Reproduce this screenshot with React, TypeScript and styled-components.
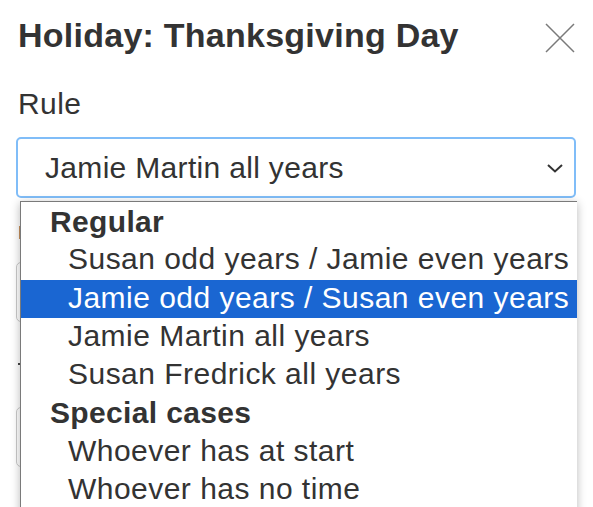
import React from "react";
import styled, { createGlobalStyle } from "styled-components";

const Global = createGlobalStyle`
  html, body { margin: 0; padding: 0; background: #fff; }
  body { font-family: "Liberation Sans", Arial, sans-serif; color: #333; overflow: hidden; }
  * { box-sizing: border-box; }
`;

const Page = styled.div`
  width: 593px;
  height: 507px;
  padding: 0 17px 0 16px;
  position: relative;
  overflow: hidden;
`;

const Header = styled.div`
  display: flex;
  justify-content: space-between;
  align-items: flex-start;
  padding: 13px 0 0 2px;
  height: 78px;
`;

const Title = styled.h1`
  margin: 0;
  font-size: 34px;
  font-weight: 700;
  line-height: 44px;
  letter-spacing: 0.25px;
  color: #333;
`;

const CloseButton = styled.button`
  border: 0;
  background: none;
  padding: 0;
  margin: 9px 0 0 0;
  width: 32px;
  height: 32px;
  display: flex;
  align-items: center;
  justify-content: center;
`;

const Label = styled.div`
  font-size: 30px;
  line-height: 36px;
  letter-spacing: 0.45px;
  padding-left: 2px;
  margin-top: 8px;
  margin-bottom: 15px;
`;

const SelectWrap = styled.div`
  position: relative;
`;

const SelectBox = styled.div`
  height: 61px;
  border: 2px solid #80bdf8;
  border-radius: 5px;
  display: flex;
  align-items: center;
  justify-content: space-between;
  padding: 0 10px 0 27px;
  font-size: 30px;
  letter-spacing: 0.32px;
  background: #fff;
`;

const Underlay = styled.div`
  display: flex;
  flex-direction: column;
  padding-top: 28px;
`;

const Accent = styled.div`
  width: 1px;
  height: 13px;
  margin-left: 3px;
  background: #c7925e;
`;

const Field = styled.div<{ $top: number }>`
  margin-top: ${(p) => p.$top}px;
  height: 60px;
  border: 1px solid #c9c9c9;
  border-radius: 5px;
`;

const SubLabel = styled.div`
  margin-top: 41px;
  margin-left: 2px;
  width: 2px;
  height: 2px;
  background: #444;
`;

const Menu = styled.div`
  position: absolute;
  left: 4px;
  right: -1px;
  top: 64px;
  height: 320px;
  background: #fff;
  border-left: 1px solid #7a7a7a;
  border-top: 1px solid #7a7a7a;
  box-shadow: 0 2px 9px rgba(0, 0, 0, 0.28);
  display: flex;
  flex-direction: column;
  padding-top: 1px;
`;

const GroupLabel = styled.div`
  height: 38.3px;
  line-height: 38px;
  font-size: 30px;
  font-weight: 700;
  letter-spacing: 0.35px;
  padding-left: 29px;
  color: #333;
  white-space: nowrap;
`;

const Option = styled.div<{ $selected?: boolean }>`
  height: 38.3px;
  line-height: 36px;
  font-size: 30px;
  letter-spacing: 0.47px;
  padding-left: 47px;
  white-space: nowrap;
  background: ${(p) => (p.$selected ? "#1a66d2" : "transparent")};
  color: ${(p) => (p.$selected ? "#fff" : "#333")};
`;

const groups = [
  {
    label: "Regular",
    options: [
      "Susan odd years / Jamie even years",
      "Jamie odd years / Susan even years",
      "Jamie Martin all years",
      "Susan Fredrick all years",
    ],
  },
  {
    label: "Special cases",
    options: ["Whoever has at start", "Whoever has no time"],
  },
];

export default function App() {
  const selected = "Jamie odd years / Susan even years";
  return (
    <Page>
      <Global />
      <Header>
        <Title>Holiday: Thanksgiving Day</Title>
        <CloseButton aria-label="Close">
          <svg width="32" height="32" viewBox="0 0 32 32">
            <path d="M2 2 L30 30 M30 2 L2 30" stroke="#7a7a7a" strokeWidth="1.5" fill="none" />
          </svg>
        </CloseButton>
      </Header>
      <Label>Rule</Label>
      <SelectWrap>
        <SelectBox>
          <span>Jamie Martin all years</span>
          <svg width="18" height="12" viewBox="0 0 18 12">
            <path d="M2 3 L9 9.5 L16 3" stroke="#333" strokeWidth="2" fill="none" />
          </svg>
        </SelectBox>
        <Underlay>
          <Accent />
          <Field $top={23} />
          <SubLabel />
          <Field $top={42} />
        </Underlay>
        <Menu>
          {groups.map((g) => (
            <React.Fragment key={g.label}>
              <GroupLabel>{g.label}</GroupLabel>
              {g.options.map((o) => (
                <Option key={o} $selected={o === selected}>
                  {o}
                </Option>
              ))}
            </React.Fragment>
          ))}
        </Menu>
      </SelectWrap>
    </Page>
  );
}
